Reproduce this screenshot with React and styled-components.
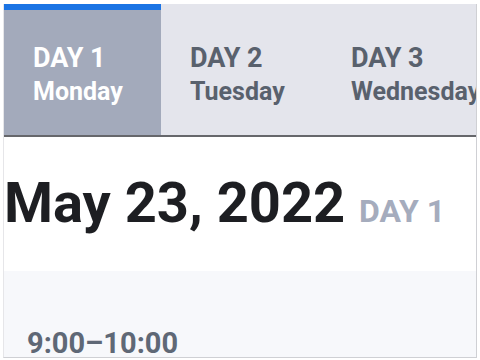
import React from "react";
import styled, { createGlobalStyle } from "styled-components";

const GlobalStyle = createGlobalStyle`
  html, body {
    margin: 0;
    padding: 0;
    background: #ffffff;
  }
  body {
    font-family: Roboto, "Noto Sans", sans-serif;
  }
`;

const days = [
  { label: "DAY 1", name: "Monday" },
  { label: "DAY 2", name: "Tuesday" },
  { label: "DAY 3", name: "Wednesday" },
];

export default function App() {
  const active = 0;
  return (
    <>
      <GlobalStyle />
      <Outer>
        <Frame>
          <TabBar>
            {days.map((d, i) => (
              <Tab key={d.label} $active={i === active}>
                <TabLabel>{d.label}</TabLabel>
                <TabDay>{d.name}</TabDay>
              </Tab>
            ))}
          </TabBar>
          <DateHeading>
            May 23, 2022 <DayTag>DAY 1</DayTag>
          </DateHeading>
          <Session>
            <SessionTime>9:00–10:00</SessionTime>
          </Session>
        </Frame>
      </Outer>
    </>
  );
}

const Outer = styled.div`
  width: 480px;
  height: 360px;
  padding: 4px 3px 2px 3px;
  box-sizing: border-box;
  overflow: hidden;
`;

const Frame = styled.div`
  height: 100%;
  box-sizing: border-box;
  border-left: 1px solid #e6e6e9;
  border-right: 1px solid #cfd0d4;
  border-bottom: 1px solid #cfd0d4;
  overflow: hidden;
  display: flex;
  flex-direction: column;
`;

const TabBar = styled.div`
  display: flex;
  height: 133px;
  box-sizing: border-box;
  background: #e4e5ec;
  border-bottom: 2px solid #66676b;
  flex-shrink: 0;
  overflow: hidden;
`;

const Tab = styled.div`
  width: ${(p) => (p.$active ? "157px" : "161px")};
  flex-shrink: 0;
  box-sizing: border-box;
  padding: ${(p) => (p.$active ? "31px 0 0 29px" : "37px 0 0 29px")};
  border-top: ${(p) => (p.$active ? "6px solid #1b74e4" : "none")};
  background: ${(p) => (p.$active ? "#a3aabb" : "transparent")};
  color: ${(p) => (p.$active ? "#ffffff" : "#59616d")};
  white-space: nowrap;
`;

const TabLabel = styled.div`
  font-size: 27px;
  font-weight: 700;
  line-height: 34px;
`;

const TabDay = styled.div`
  font-size: 25px;
  font-weight: 700;
  line-height: 34px;
`;

const DateHeading = styled.h1`
  margin: 0;
  padding: 33px 0 0 0;
  font-size: 56px;
  font-weight: 700;
  line-height: 66px;
  color: #1d1e22;
  white-space: nowrap;
`;

const DayTag = styled.span`
  font-size: 32px;
  color: #a5acbd;
`;

const Session = styled.div`
  margin-top: 27px;
  flex: 1;
  background: #f7f8fb;
  padding: 55px 0 0 23px;
`;

const SessionTime = styled.div`
  font-size: 29px;
  font-weight: 700;
  line-height: 34px;
  color: #5f6876;
`;
